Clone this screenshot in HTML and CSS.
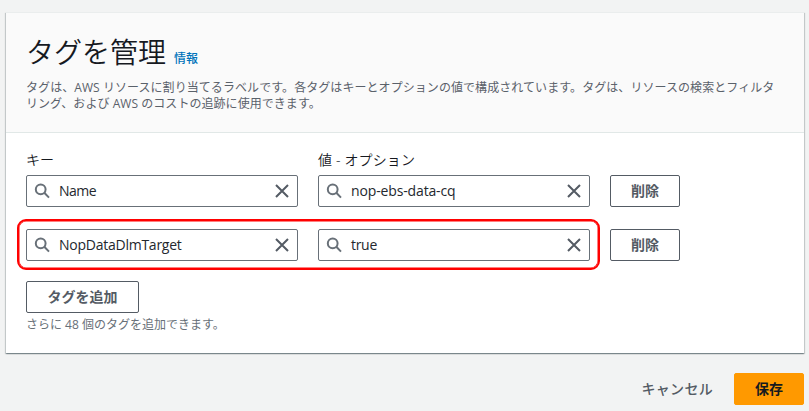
FILE: index.html
```html
<!DOCTYPE html>
<html lang="ja">
<head>
<meta charset="utf-8">
<title>タグを管理</title>
<link rel="stylesheet" href="styles.css">
</head>
<body>
<svg class="defs" aria-hidden="true">
  <symbol id="search" viewBox="0 0 16 16"><circle cx="6.7" cy="6.3" r="4.9"/><path d="M10.3 9.8l4.7 4.8"/></symbol>
  <symbol id="close" viewBox="0 0 16 16"><path d="M2 2l12 12M14 2L2 14"/></symbol>
</svg>
<main class="page">
  <section class="card">
    <header class="card-header">
      <div class="heading"><h1>タグを管理</h1><a class="info">情報</a></div>
      <p class="description"><span class="line first">タグは、AWS リソースに割り当てるラベルです。各タグはキーとオプションの値で構成されています。タグは、リソースの検索とフィルタ</span><span class="line second">リング、および AWS のコストの追跡に使用できます。</span></p>
    </header>
    <div class="card-body">
      <div class="row labels"><span>キー</span><span class="value-label">値 - オプション</span></div>
      <div class="row">
        <div class="field"><svg class="search"><use href="#search"/></svg><span class="text name">Name</span><svg class="close"><use href="#close"/></svg></div>
        <div class="field"><svg class="search"><use href="#search"/></svg><span class="text value">nop-ebs-data-cq</span><svg class="close"><use href="#close"/></svg></div>
        <button class="button">削除</button>
      </div>
      <div class="row marked">
        <div class="field"><svg class="search"><use href="#search"/></svg><span class="text target">NopDataDlmTarget</span><svg class="close"><use href="#close"/></svg></div>
        <div class="field"><svg class="search"><use href="#search"/></svg><span class="text true">true</span><svg class="close"><use href="#close"/></svg></div>
        <button class="button">削除</button>
        <div class="highlight"></div>
      </div>
      <button class="button add">タグを追加</button>
      <p class="hint">さらに 48 個のタグを追加できます。</p>
    </div>
  </section>
  <footer class="actions"><button class="cancel">キャンセル</button><button class="button save">保存</button></footer>
</main>
</body>
</html>
```
FILE: styles.css
```css
* { box-sizing: border-box; }
body {
  margin: 0;
  height: 411px;
  overflow: hidden;
  background: #f2f3f3;
  color: #16191f;
  font-family: "Open Sans", "Noto Sans CJK JP", sans-serif;
  font-size: 14px;
}
.defs { display: none; }
.page { padding: 12px 5px 0 6px; }
.card {
  height: 341px;
  background: #fff;
  box-shadow: 0 1px 1px 0 rgba(0, 28, 36, .3), 1px 1px 1px 0 rgba(0, 28, 36, .15), -1px 1px 1px 0 rgba(0, 28, 36, .15);
}
.card-header {
  height: 121px;
  padding: 20px 20px 0;
  background: #fafafa;
  border-top: 1px solid #eaeded;
  border-bottom: 1px solid #e1e8e7;
}
.heading { display: flex; align-items: baseline; height: 36px; line-height: 36px; }
h1 { margin: 0; font-size: 28px; font-weight: 350; font-family: "Noto Sans CJK JP", sans-serif; }
.info { margin-left: 8px; color: #0073bb; font-size: 12px; font-weight: 500; }
.description { margin: 11px 0 0; color: #5a616a; font-size: 12px; line-height: 16px; }
.line { display: block; white-space: nowrap; }
.first { letter-spacing: .065px; }
.second { letter-spacing: .05px; }
.card-body { padding: 17px 20px 0; }
.row { display: grid; grid-template-columns: 272px 272px 70px; column-gap: 20px; margin-bottom: 22px; }
.labels { height: 20px; margin-bottom: 5px; line-height: 20px; font-weight: 350; }
.value-label { letter-spacing: .15px; }
.field {
  display: flex;
  align-items: center;
  height: 32px;
  padding: 0 7px;
  border: 1px solid #687078;
  border-radius: 2px;
  background: #fff;
}
.field svg { flex: none; width: 16px; height: 16px; fill: none; stroke: #687078; stroke-width: 2; }
.field .close { stroke: #545b64; margin-left: auto; }
.text { margin-left: 9px; white-space: nowrap; line-height: 20px; color: #24282e; }
.name { letter-spacing: -.5px; }
.value { letter-spacing: -.14px; }
.target { letter-spacing: -.25px; }
.true { letter-spacing: -.3px; }
.button {
  height: 32px;
  padding: 0 0 2px;
  border: 1px solid #545b64;
  border-radius: 2px;
  background: #fff;
  color: #545b64;
  font: 700 14px/20px "Noto Sans CJK JP", sans-serif;
}
.marked { position: relative; margin-bottom: 20px; }
.highlight {
  position: absolute;
  left: -9px;
  top: -10px;
  width: 583px;
  height: 51px;
  border: 2px solid #f00;
  box-shadow: inset 0 0 0 .5px #f00;
  border-radius: 9px;
}
.add { display: block; width: 113px; }
.hint { margin: 4px 0 0; color: #687078; font-size: 12px; line-height: 16px; }
.actions { display: flex; justify-content: flex-end; gap: 21px; margin-top: 20px; }
.cancel { padding: 0 0 2px; border: 0; background: none; color: #545b64; font: 500 14px/20px "Noto Sans CJK JP", sans-serif; letter-spacing: .3px; }
.save { width: 70px; border-color: #f90; background: #f90; color: #16191f; }
```
